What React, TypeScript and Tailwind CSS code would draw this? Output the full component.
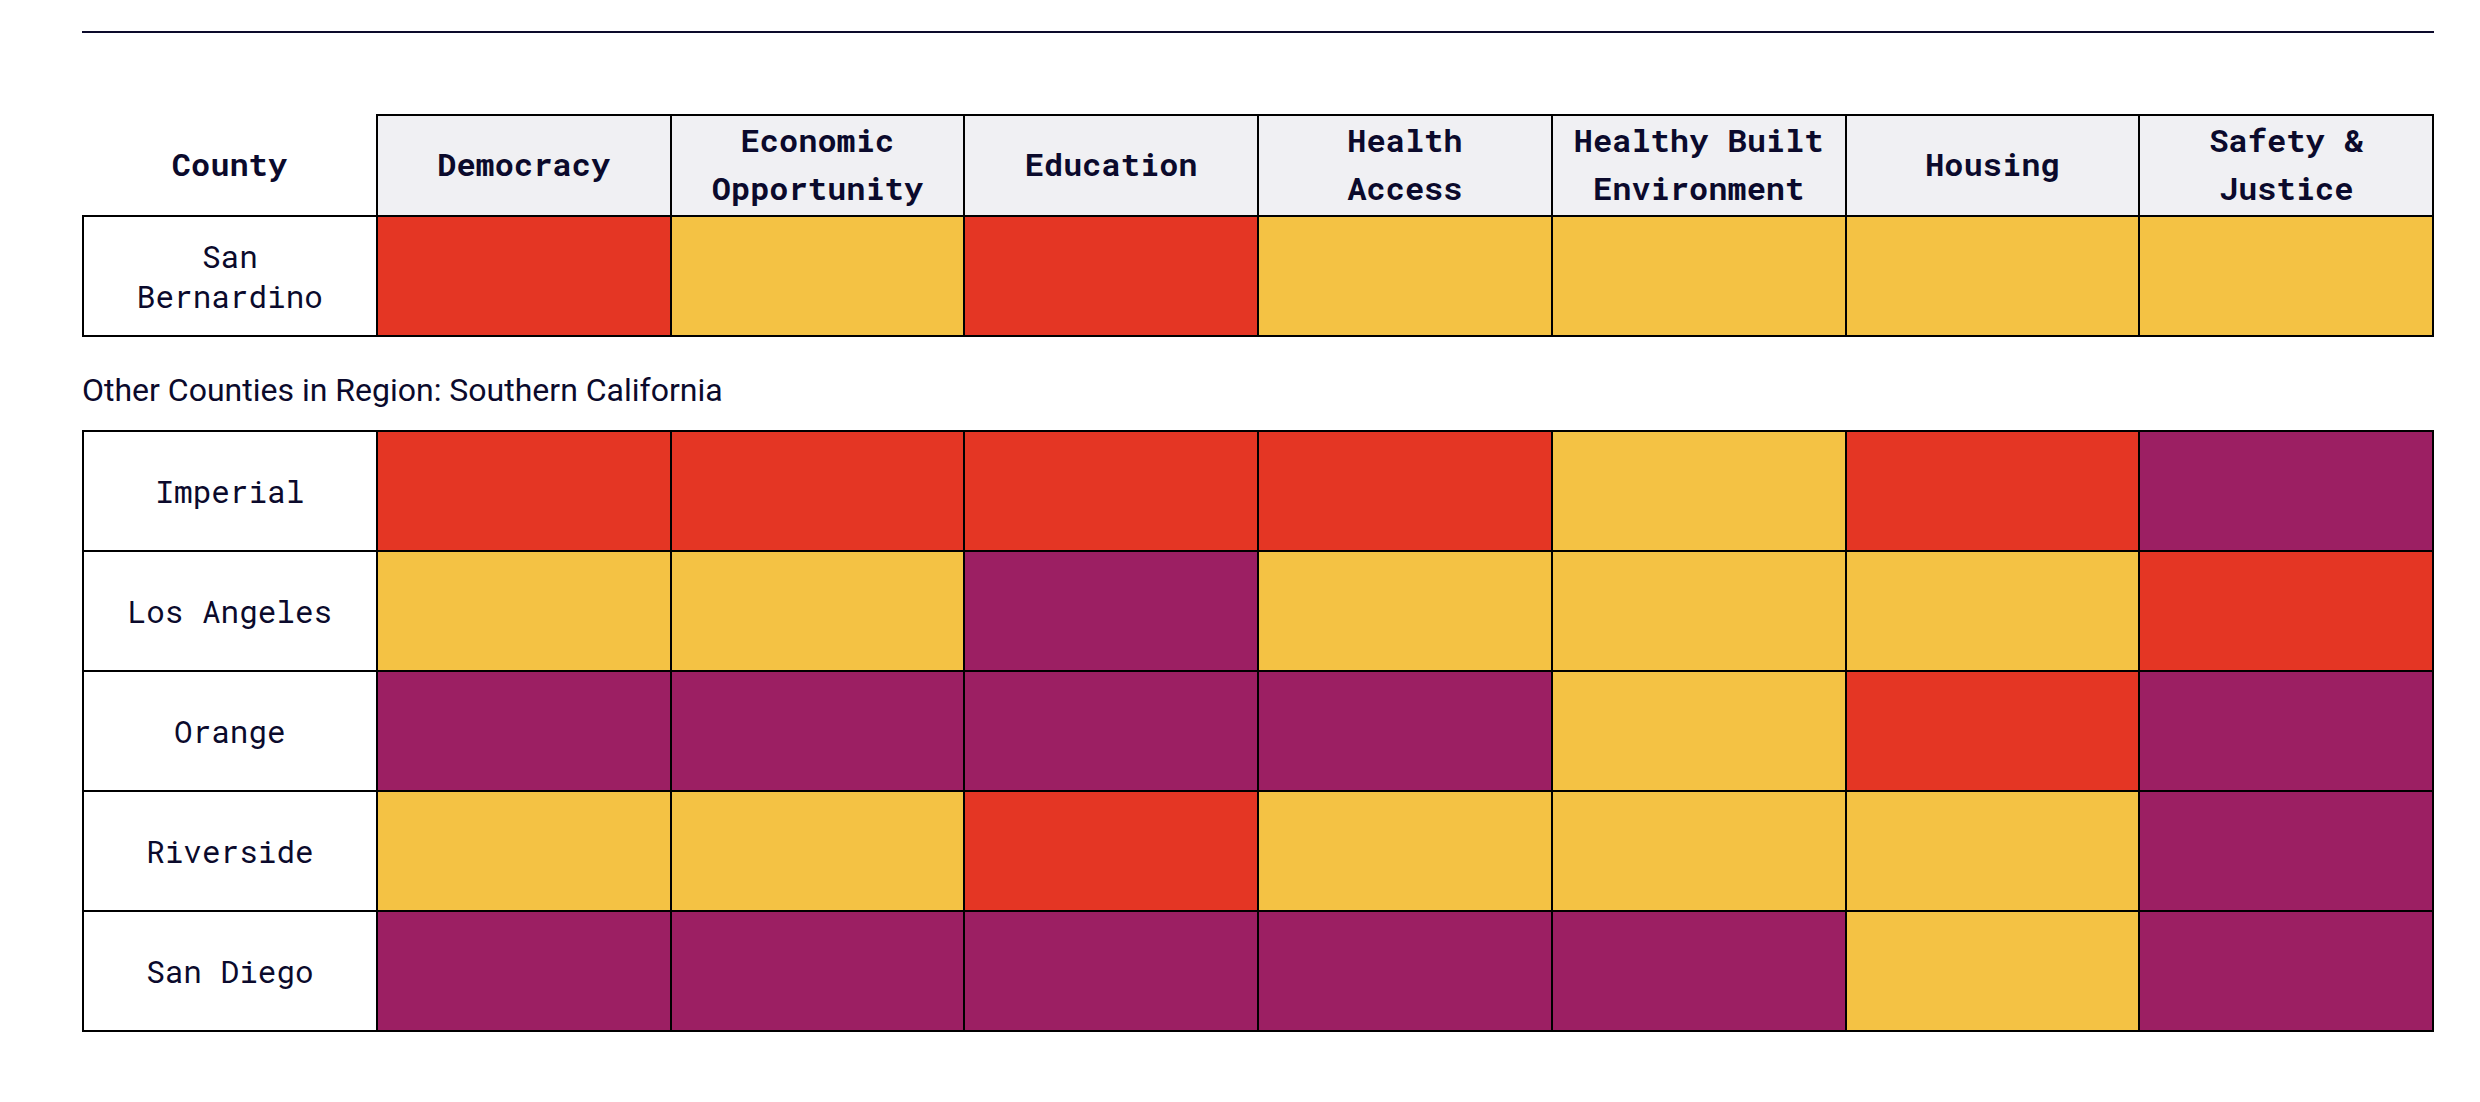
const R = "bg-[#e43624]"
const Y = "bg-[#f4c244]"
const P = "bg-[#9c1f63]"

const headers: string[][] = [
  ["Democracy"],
  ["Economic", "Opportunity"],
  ["Education"],
  ["Health", "Access"],
  ["Healthy Built", "Environment"],
  ["Housing"],
  ["Safety &", "Justice"],
]

const selected = { name: ["San", "Bernardino"], cells: [R, Y, R, Y, Y, Y, Y] }

const others = [
  { name: ["Imperial"], cells: [R, R, R, R, Y, R, P] },
  { name: ["Los Angeles"], cells: [Y, Y, P, Y, Y, Y, R] },
  { name: ["Orange"], cells: [P, P, P, P, Y, R, P] },
  { name: ["Riverside"], cells: [Y, Y, R, Y, Y, Y, P] },
  { name: ["San Diego"], cells: [P, P, P, P, P, Y, P] },
]

const mono = "font-['Roboto_Mono','DejaVu_Sans_Mono',monospace]"

function Lines({ lines }: { lines: string[] }) {
  return (
    <>
      {lines.map((l, i) => (
        <span key={i} className="block whitespace-nowrap">
          {l}
        </span>
      ))}
    </>
  )
}

function Row({ name, cells }: { name: string[]; cells: string[] }) {
  return (
    <tr className="h-[120px]">
      <td className={`border-2 border-black bg-white text-center text-[31px] leading-[40px] text-[#0b0a2c] ${mono}`}>
        <Lines lines={name} />
      </td>
      {cells.map((c, i) => (
        <td key={i} className={`border-2 border-black ${c}`} />
      ))}
    </tr>
  )
}

export default function App() {
  return (
    <div className="min-h-screen bg-white pl-[82px] pr-[46px] pt-[31px]">
      <div className="h-[2px] bg-[#0c0a2b]" />

      <table className="mt-[81px] w-full table-fixed border-collapse">
        <thead>
          <tr className="h-[101px]">
            <th className={`border-0 pb-[3px] text-center text-[32px] font-bold leading-[48px] text-[#0b0a2c] ${mono}`}>
              County
            </th>
            {headers.map((h, i) => (
              <th
                key={i}
                className={`border-2 border-black bg-[#f0f0f3] pb-[3px] text-center text-[32px] font-bold leading-[48px] text-[#0b0a2c] ${mono}`}
              >
                <Lines lines={h} />
              </th>
            ))}
          </tr>
        </thead>
        <tbody>
          <Row name={selected.name} cells={selected.cells} />
        </tbody>
      </table>

      <p className="mt-[29px] mb-[16px] font-['Roboto',sans-serif] text-[32px] leading-[48px] text-[#0b0a2c]">
        Other Counties in Region: Southern California
      </p>

      <table className="w-full table-fixed border-collapse">
        <tbody>
          {others.map((o) => (
            <Row key={o.name[0]} name={o.name} cells={o.cells} />
          ))}
        </tbody>
      </table>
    </div>
  )
}
